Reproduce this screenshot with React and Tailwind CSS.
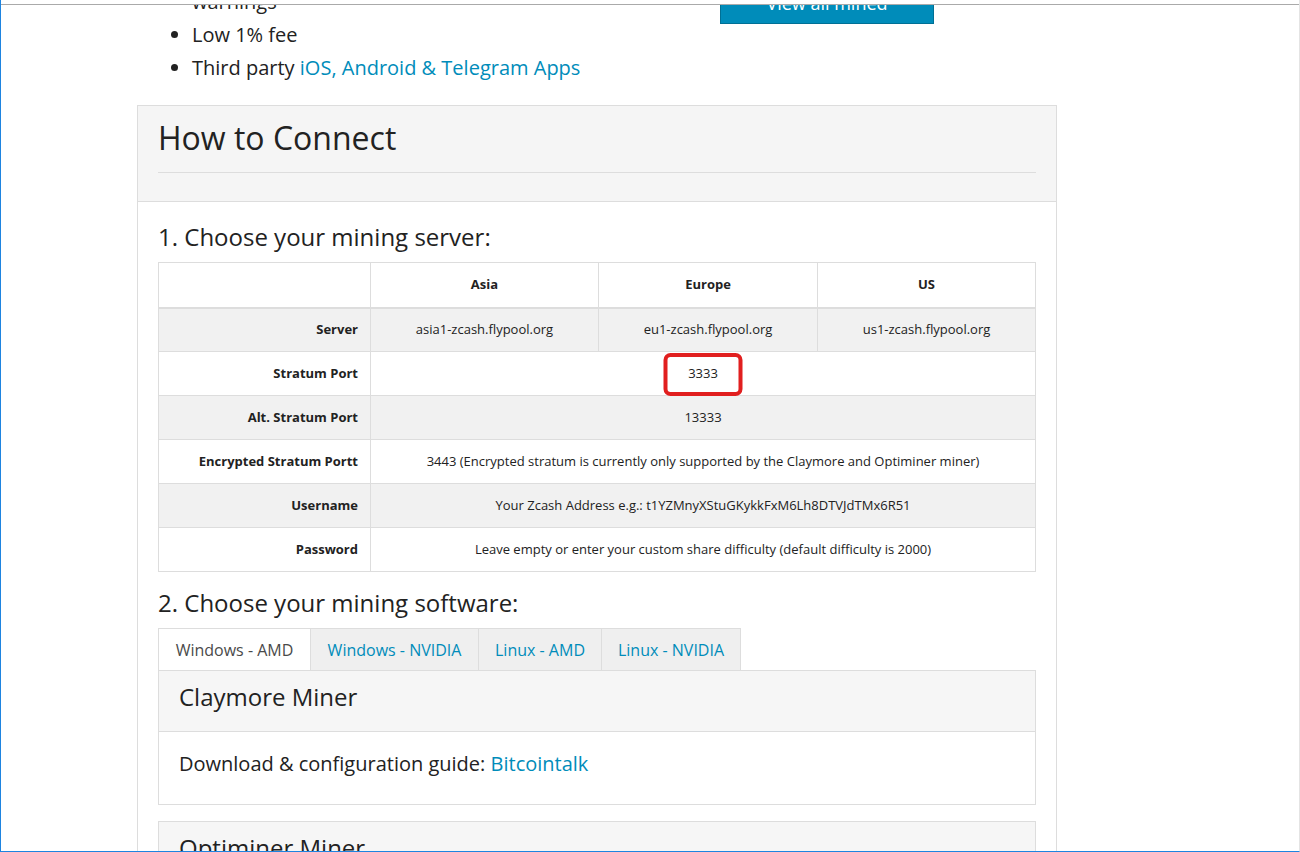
const link = 'text-[#008cba]';

const rows = [
  { label: 'Server', cells: ['asia1-zcash.flypool.org', 'eu1-zcash.flypool.org', 'us1-zcash.flypool.org'] },
  { label: 'Stratum Port', span: '3333', mark: true },
  { label: 'Alt. Stratum Port', span: '13333' },
  { label: 'Encrypted Stratum Portt', span: '3443 (Encrypted stratum is currently only supported by the Claymore and Optiminer miner)' },
  { label: 'Username', span: 'Your Zcash Address e.g.: t1YZMnyXStuGKykkFxM6Lh8DTVJdTMx6R51' },
  { label: 'Password', span: 'Leave empty or enter your custom share difficulty (default difficulty is 2000)' },
];

const tabs = [
  { name: 'Windows - AMD', w: 'w-[152px]', active: true },
  { name: 'Windows - NVIDIA', w: 'w-[168px]' },
  { name: 'Linux - AMD', w: 'w-[123px]' },
  { name: 'Linux - NVIDIA', w: 'w-[140px]' },
];

function MinerBox({ title, children }) {
  return (
    <div className="border border-[#dddddd] mb-[16px]">
      <div className="h-[61px] bg-[#f6f6f6] px-[20px] pt-[10px] border-b border-[#dddddd]">
        <h4 className="text-[24px] leading-[32px]">{title}</h4>
      </div>
      <div className="h-[72px] bg-white px-[20px] pt-[17px] text-[20px] leading-[30px]">{children}</div>
    </div>
  );
}

export default function App() {
  return (
    <div className="w-[1300px] h-[852px] overflow-hidden bg-white flex flex-col border-l border-b border-r border-l-[#1e84e0] border-b-[#1e84e0] border-r-[#e4e4e4] text-[#222222] font-['Open_Sans','Liberation_Sans',sans-serif]">
      <div className="h-[4px] shrink-0" />
      <div className="shrink-0 border-t border-[#aaaaaa]" />
      <div className="flex-1 overflow-hidden">
        <div className="-mt-[20px] ml-[136px] w-[920px]">
          {/* features + button */}
          <div className="flex items-start">
            <div className="w-[583px]">
              <ul className="list-disc pl-[55px] text-[20px] leading-[33px] mb-[21px]">
                <li className="list-none">warnings</li>
                <li>Low 1% fee</li>
                <li>
                  Third party <a className={link}>iOS, Android &amp; Telegram Apps</a>
                </li>
              </ul>
            </div>
            <button className="w-[214px] -mt-[16px] h-[55px] bg-[#008cba] border border-[#007095] text-white text-[18px] leading-[24px] pt-[21px] flex items-start justify-center">
              View all mined
            </button>
          </div>

          {/* panel */}
          <div className="border border-[#dddddd] pb-[40px]">
            <div className="bg-[#f5f5f5] px-[20px] pt-[12px] border-b border-[#dddddd]">
              <h2 className="text-[32px] leading-[40px]">How to Connect</h2>
              <div className="mt-[14px] mb-[28px] border-t border-[#dddddd]" />
            </div>
            <div className="px-[20px] pt-[19px]">
              <h3 className="text-[24px] leading-[32px]">1. Choose your mining server:</h3>
              <table className="mt-[9px] w-full table-fixed border-collapse border border-[#dddddd] text-[13px]">
                <colgroup>
                  <col className="w-[212px]" />
                  <col className="w-[228px]" />
                  <col className="w-[219px]" />
                  <col />
                </colgroup>
                <thead>
                  <tr className="h-[45px] bg-white">
                    <th className="border border-[#dddddd] border-b-2" />
                    <th className="border border-[#dddddd] border-b-2 font-bold">Asia</th>
                    <th className="border border-[#dddddd] border-b-2 font-bold">Europe</th>
                    <th className="border border-[#dddddd] border-b-2 font-bold">US</th>
                  </tr>
                </thead>
                <tbody>
                  {rows.map((r, i) => (
                    <tr key={r.label} className={`h-[44px] ${i % 2 === 0 ? 'bg-[#f1f1f1]' : 'bg-white'}`}>
                      <td className="border border-[#dddddd] text-right font-bold pr-[12px]">{r.label}</td>
                      {r.cells ? (
                        r.cells.map((c) => (
                          <td key={c} className="border border-[#dddddd] text-center">
                            {c}
                          </td>
                        ))
                      ) : (
                        <td colSpan={3} className="relative border border-[#dddddd] text-center">
                          {r.span}
                          {r.mark && (
                            <div className="absolute left-1/2 top-[1px] -translate-x-1/2 w-[79px] h-[43px] border-[4px] border-[#e11f1f] rounded-[7px]" />
                          )}
                        </td>
                      )}
                    </tr>
                  ))}
                </tbody>
              </table>

              <h3 className="mt-[15px] text-[24px] leading-[32px]">2. Choose your mining software:</h3>
              <div className="mt-[9px] flex">
                {tabs.map((t, i) => (
                  <div
                    key={t.name}
                    className={`${t.w} h-[42px] flex items-center justify-center text-[16px] border-t border-l border-[#dddddd] ${i === tabs.length - 1 ? 'border-r' : ''} ${
                      t.active ? 'bg-white text-[#4a4a4a]' : 'bg-[#efefef] text-[#008cba]'
                    }`}
                  >
                    {t.name}
                  </div>
                ))}
              </div>
              <MinerBox title="Claymore Miner">
                Download &amp; configuration guide: <a className={link}>Bitcointalk</a>
              </MinerBox>
              <MinerBox title="Optiminer Miner">
                Download &amp; configuration guide: <a className={link}>Bitcointalk</a>
              </MinerBox>
            </div>
          </div>
        </div>
      </div>
    </div>
  );
}
